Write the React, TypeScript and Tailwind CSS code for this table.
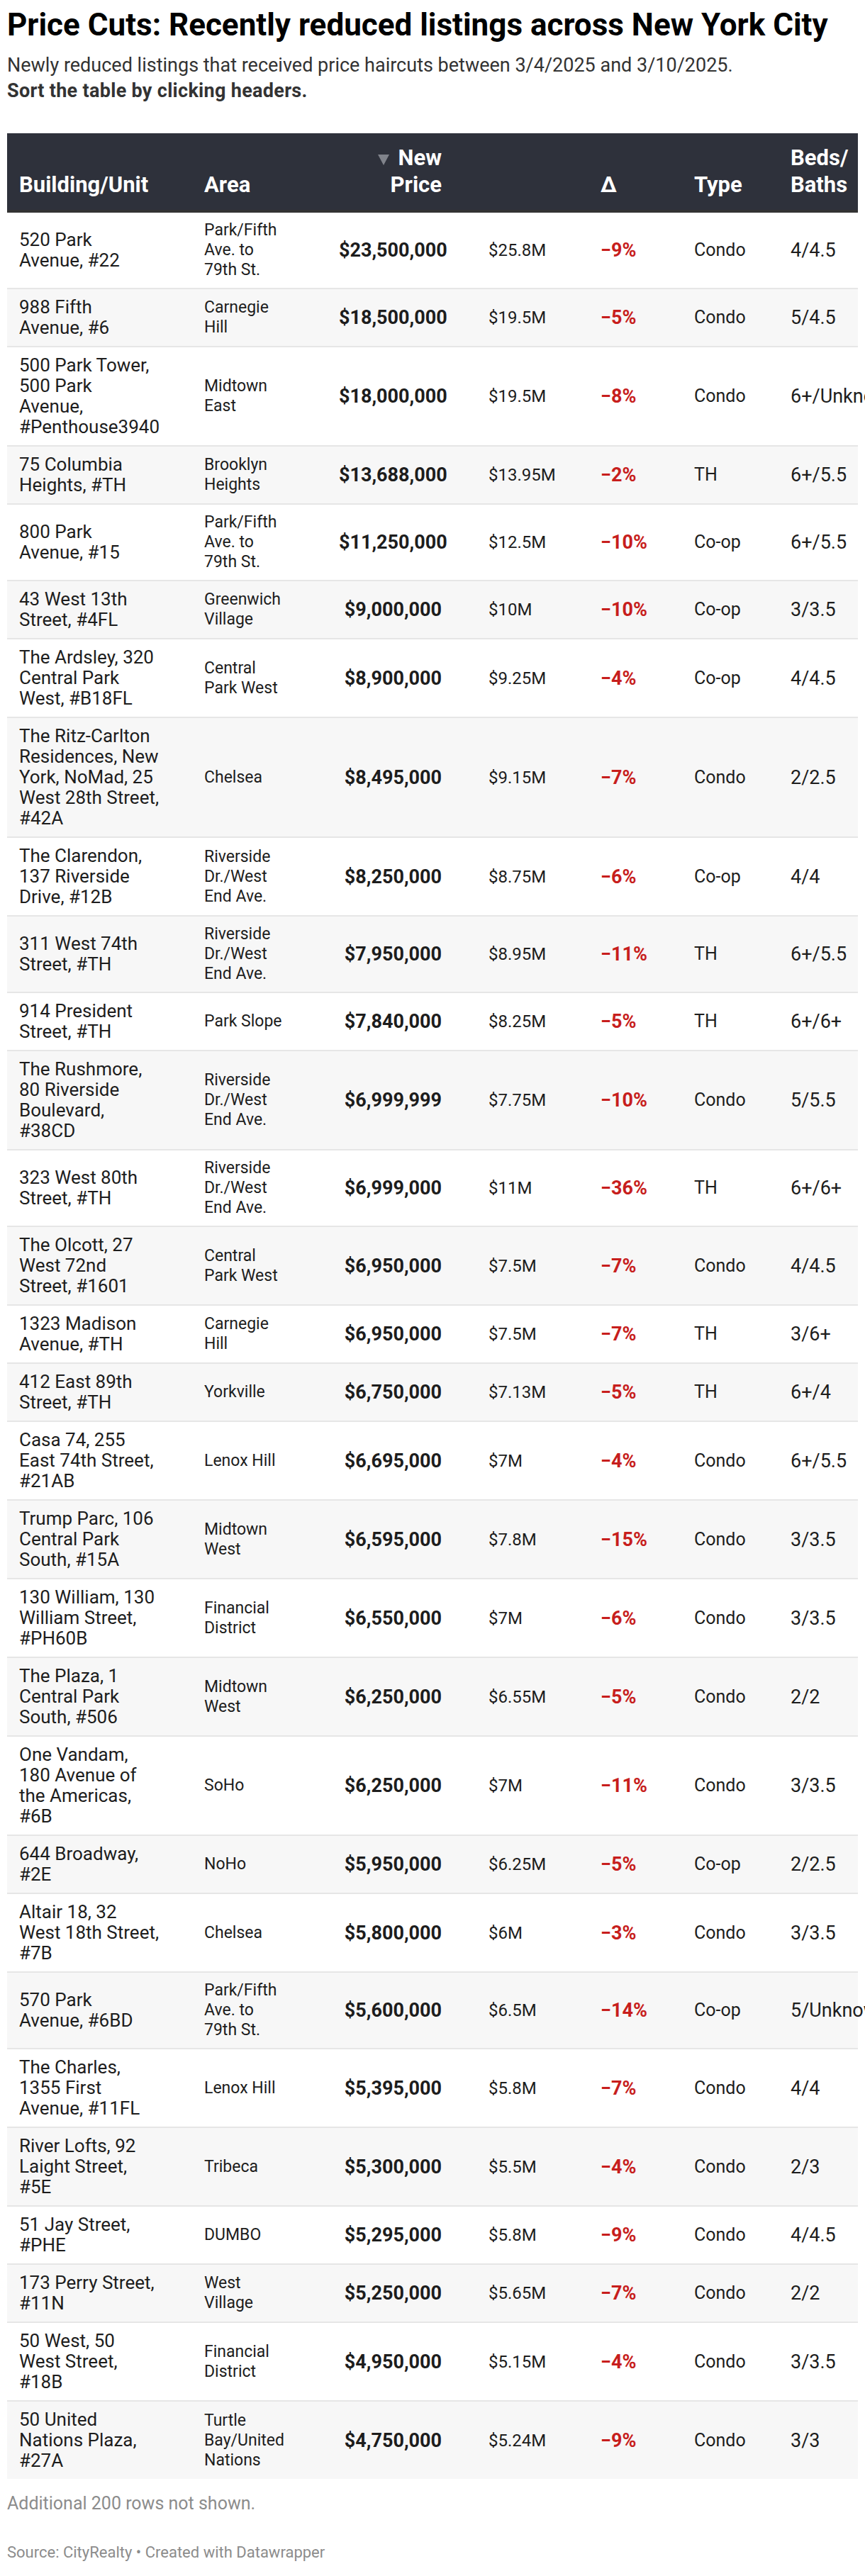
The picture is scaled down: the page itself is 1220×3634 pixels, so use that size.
const rows: [string, string, string, string, string, string, string][] = [
  ["520 Park\nAvenue, #22", "Park/Fifth\nAve. to\n79th St.", "$23,500,000", "$25.8M", "−9%", "Condo", "4/4.5"],
  ["988 Fifth\nAvenue, #6", "Carnegie\nHill", "$18,500,000", "$19.5M", "−5%", "Condo", "5/4.5"],
  ["500 Park Tower,\n500 Park\nAvenue,\n#Penthouse3940", "Midtown\nEast", "$18,000,000", "$19.5M", "−8%", "Condo", "6+/Unknown"],
  ["75 Columbia\nHeights, #TH", "Brooklyn\nHeights", "$13,688,000", "$13.95M", "−2%", "TH", "6+/5.5"],
  ["800 Park\nAvenue, #15", "Park/Fifth\nAve. to\n79th St.", "$11,250,000", "$12.5M", "−10%", "Co-op", "6+/5.5"],
  ["43 West 13th\nStreet, #4FL", "Greenwich\nVillage", "$9,000,000", "$10M", "−10%", "Co-op", "3/3.5"],
  ["The Ardsley, 320\nCentral Park\nWest, #B18FL", "Central\nPark West", "$8,900,000", "$9.25M", "−4%", "Co-op", "4/4.5"],
  ["The Ritz-Carlton\nResidences, New\nYork, NoMad, 25\nWest 28th Street,\n#42A", "Chelsea", "$8,495,000", "$9.15M", "−7%", "Condo", "2/2.5"],
  ["The Clarendon,\n137 Riverside\nDrive, #12B", "Riverside\nDr./West\nEnd Ave.", "$8,250,000", "$8.75M", "−6%", "Co-op", "4/4"],
  ["311 West 74th\nStreet, #TH", "Riverside\nDr./West\nEnd Ave.", "$7,950,000", "$8.95M", "−11%", "TH", "6+/5.5"],
  ["914 President\nStreet, #TH", "Park Slope", "$7,840,000", "$8.25M", "−5%", "TH", "6+/6+"],
  ["The Rushmore,\n80 Riverside\nBoulevard,\n#38CD", "Riverside\nDr./West\nEnd Ave.", "$6,999,999", "$7.75M", "−10%", "Condo", "5/5.5"],
  ["323 West 80th\nStreet, #TH", "Riverside\nDr./West\nEnd Ave.", "$6,999,000", "$11M", "−36%", "TH", "6+/6+"],
  ["The Olcott, 27\nWest 72nd\nStreet, #1601", "Central\nPark West", "$6,950,000", "$7.5M", "−7%", "Condo", "4/4.5"],
  ["1323 Madison\nAvenue, #TH", "Carnegie\nHill", "$6,950,000", "$7.5M", "−7%", "TH", "3/6+"],
  ["412 East 89th\nStreet, #TH", "Yorkville", "$6,750,000", "$7.13M", "−5%", "TH", "6+/4"],
  ["Casa 74, 255\nEast 74th Street,\n#21AB", "Lenox Hill", "$6,695,000", "$7M", "−4%", "Condo", "6+/5.5"],
  ["Trump Parc, 106\nCentral Park\nSouth, #15A", "Midtown\nWest", "$6,595,000", "$7.8M", "−15%", "Condo", "3/3.5"],
  ["130 William, 130\nWilliam Street,\n#PH60B", "Financial\nDistrict", "$6,550,000", "$7M", "−6%", "Condo", "3/3.5"],
  ["The Plaza, 1\nCentral Park\nSouth, #506", "Midtown\nWest", "$6,250,000", "$6.55M", "−5%", "Condo", "2/2"],
  ["One Vandam,\n180 Avenue of\nthe Americas,\n#6B", "SoHo", "$6,250,000", "$7M", "−11%", "Condo", "3/3.5"],
  ["644 Broadway,\n#2E", "NoHo", "$5,950,000", "$6.25M", "−5%", "Co-op", "2/2.5"],
  ["Altair 18, 32\nWest 18th Street,\n#7B", "Chelsea", "$5,800,000", "$6M", "−3%", "Condo", "3/3.5"],
  ["570 Park\nAvenue, #6BD", "Park/Fifth\nAve. to\n79th St.", "$5,600,000", "$6.5M", "−14%", "Co-op", "5/Unknown"],
  ["The Charles,\n1355 First\nAvenue, #11FL", "Lenox Hill", "$5,395,000", "$5.8M", "−7%", "Condo", "4/4"],
  ["River Lofts, 92\nLaight Street,\n#5E", "Tribeca", "$5,300,000", "$5.5M", "−4%", "Condo", "2/3"],
  ["51 Jay Street,\n#PHE", "DUMBO", "$5,295,000", "$5.8M", "−9%", "Condo", "4/4.5"],
  ["173 Perry Street,\n#11N", "West\nVillage", "$5,250,000", "$5.65M", "−7%", "Condo", "2/2"],
  ["50 West, 50\nWest Street,\n#18B", "Financial\nDistrict", "$4,950,000", "$5.15M", "−4%", "Condo", "3/3.5"],
  ["50 United\nNations Plaza,\n#27A", "Turtle\nBay/United\nNations", "$4,750,000", "$5.24M", "−9%", "Condo", "3/3"],
];

const cols = "grid grid-cols-[261px_190px_145px_224px_132px_136px_1fr]";

export default function App() {
  return (
    <div
      className="w-[1220px] overflow-hidden bg-white px-[10px] pt-[10px] pb-[6px] text-[#1d1d1d]"
      style={{ fontFamily: "Roboto, 'Liberation Sans', sans-serif" }}
    >
      {/* Titel + Beschreibung */}
      <h1 className="text-[44px] font-bold leading-[50px] text-[#000]">
        Price Cuts: Recently reduced listings across New York City
      </h1>
      <p className="mt-[14px] text-[27px] leading-[36px] text-[#333]">
        Newly reduced listings that received price haircuts between 3/4/2025 and 3/10/2025.
        <br />
        <b className="font-bold tracking-[0.3px]">Sort the table by clicking headers.</b>
      </p>

      {/* Tabelle */}
      <div className="mt-[42px] w-[1200px]">
        <div
          className={`${cols} items-end bg-[#2e313b] pl-[17px] pt-[16px] pb-[16px] border-b-4 border-[#333] text-[31px] font-bold leading-[38px] text-white`}
        >
          <div>Building/Unit</div>
          <div>Area</div>
          <div className="text-right">
            <svg width="16" height="15" viewBox="0 0 16 15" className="mr-[13px] inline-block align-baseline">
              <polygon points="0,0 16,0 8,15" fill="#80838b" />
            </svg>
            New
            <br />
            Price
          </div>
          <div />
          <div>Δ</div>
          <div>Type</div>
          <div>
            Beds/
            <br />
            Baths
          </div>
        </div>

        {rows.map((r, i) => (
          <div
            key={i}
            className={`${cols} items-center pl-[17px] py-[11px] ${
              i > 0 ? "border-t-2 border-[#e6e6e6]" : ""
            } ${i % 2 === 1 ? "bg-[#f7f7f7]" : "bg-white"}`}
          >
            <div className="whitespace-pre-line text-[26px] leading-[29px]">{r[0]}</div>
            <div className="whitespace-pre-line text-[23px] leading-[28px]">{r[1]}</div>
            <div className="text-right text-[27px] font-bold leading-[30px]">{r[2]}</div>
            <div className="pl-[66px] text-[24px] leading-[30px]">{r[3]}</div>
            <div className="text-[27px] font-bold leading-[30px] text-[#c71e1d]">{r[4]}</div>
            <div className="text-[25px] leading-[30px]">{r[5]}</div>
            <div className="whitespace-nowrap text-[27px] leading-[30px]">{r[6]}</div>
          </div>
        ))}
      </div>

      <p className="mt-[20px] text-[25px] leading-[30px] text-[#8c8c8c]">Additional 200 rows not shown.</p>
      <p className="mt-[40px] text-[22px] leading-[28px] text-[#8c8c8c]">
        Source: CityRealty • Created with Datawrapper
      </p>
    </div>
  );
}
